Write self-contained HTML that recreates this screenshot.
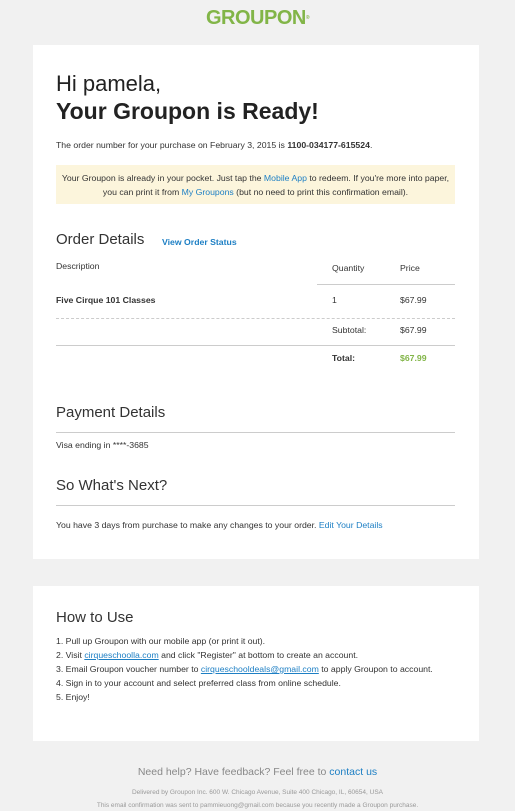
<!DOCTYPE html>
<html><head><meta charset="utf-8"><style>
*{margin:0;padding:0;box-sizing:border-box}
body{width:515px;height:807px;background:#f1f1f1;font-family:"Liberation Sans",Arial,sans-serif;color:#333;position:relative;overflow:hidden}
.a{position:absolute;white-space:nowrap}
.card{position:absolute;left:33px;width:446px;background:#fff}
.s{font-size:8.7px;line-height:12px;color:#333}
.b{color:#1d7fc4}
.h{font-size:15px;line-height:20px;color:#333}
.line{position:absolute;height:1px;background:#ccc}
u{color:#1d7fc4;text-decoration:underline}
</style></head><body>
<div class="a" style="left:0;width:515px;text-align:center;top:6px;font-size:20px;line-height:24px;font-weight:bold;color:#82b548;letter-spacing:-0.5px">GROUPON<span style="font-size:5px;vertical-align:top">®</span></div>
<div class="card" style="top:45px;height:514px"></div>
<div class="card" style="top:586px;height:155px"></div>

<div class="a" style="left:56px;top:71px;font-size:22px;line-height:26px;color:#222">Hi pamela,</div>
<div class="a" style="left:56px;top:98px;font-size:23px;line-height:26px;font-weight:bold;color:#222">Your Groupon is Ready!</div>
<div class="a s" style="left:56px;top:139px">The order number for your purchase on February 3, 2015 is <b>1100-034177-615524</b>.</div>
<div class="a" style="left:56px;top:165px;width:399px;height:39px;background:#fcf5dc"></div>
<div class="a s" style="left:56px;width:399px;text-align:center;top:171px;line-height:14px">Your Groupon is already in your pocket. Just tap the <span class="b">Mobile App</span> to redeem. If you're more into paper,<br>you can print it from <span class="b">My Groupons</span> (but no need to print this confirmation email).</div>

<div class="a h" style="left:56px;top:230px">Order Details</div>
<div class="a s b" style="left:162px;top:236px;font-weight:bold">View Order Status</div>
<div class="a s" style="left:56px;top:260px">Description</div>
<div class="a s" style="left:332px;top:262px">Quantity</div>
<div class="a s" style="left:400px;top:262px">Price</div>
<div class="line" style="left:317px;width:138px;top:284px"></div>
<div class="a s" style="left:56px;top:294px;font-weight:bold">Five Cirque 101 Classes</div>
<div class="a s" style="left:332px;top:294px">1</div>
<div class="a s" style="left:400px;top:294px">$67.99</div>
<div class="a" style="left:56px;width:399px;top:318px;border-top:1px dashed #ccc"></div>
<div class="a s" style="left:332px;top:324px">Subtotal:</div>
<div class="a s" style="left:400px;top:324px">$67.99</div>
<div class="line" style="left:56px;width:399px;top:345px"></div>
<div class="a s" style="left:332px;top:352px;font-weight:bold">Total:</div>
<div class="a s" style="left:400px;top:352px;font-weight:bold;color:#82b548">$67.99</div>

<div class="a h" style="left:56px;top:403px">Payment Details</div>
<div class="line" style="left:56px;width:399px;top:432px"></div>
<div class="a s" style="left:56px;top:439px">Visa ending in ****-3685</div>
<div class="a h" style="left:56px;top:476px">So What's Next?</div>
<div class="line" style="left:56px;width:399px;top:505px"></div>
<div class="a s" style="left:56px;top:519px">You have 3 days from purchase to make any changes to your order. <span class="b">Edit Your Details</span></div>

<div class="a h" style="left:56px;top:608px">How to Use</div>
<div class="a s" style="left:56px;top:634px;line-height:14px">1. Pull up Groupon with our mobile app (or print it out).<br>2. Visit <u>cirqueschoolla.com</u> and click "Register" at bottom to create an account.<br>3. Email Groupon voucher number to <u>cirqueschooldeals@gmail.com</u> to apply Groupon to account.<br>4. Sign in to your account and select preferred class from online schedule.<br>5. Enjoy!</div>

<div class="a" style="left:0;width:515px;text-align:center;top:765px;font-size:10.5px;line-height:14px;color:#888">Need help? Have feedback? Feel free to <span class="b">contact us</span></div>
<div class="a" style="left:0;width:515px;text-align:center;top:788px;font-size:6.5px;line-height:10px;color:#999">Delivered by Groupon Inc. 600 W. Chicago Avenue, Suite 400 Chicago, IL, 60654, USA</div>
<div class="a" style="left:0;width:515px;text-align:center;top:801px;font-size:6.5px;line-height:10px;color:#999">This email confirmation was sent to pammieuong@gmail.com because you recently made a Groupon purchase.</div>
</body></html>
